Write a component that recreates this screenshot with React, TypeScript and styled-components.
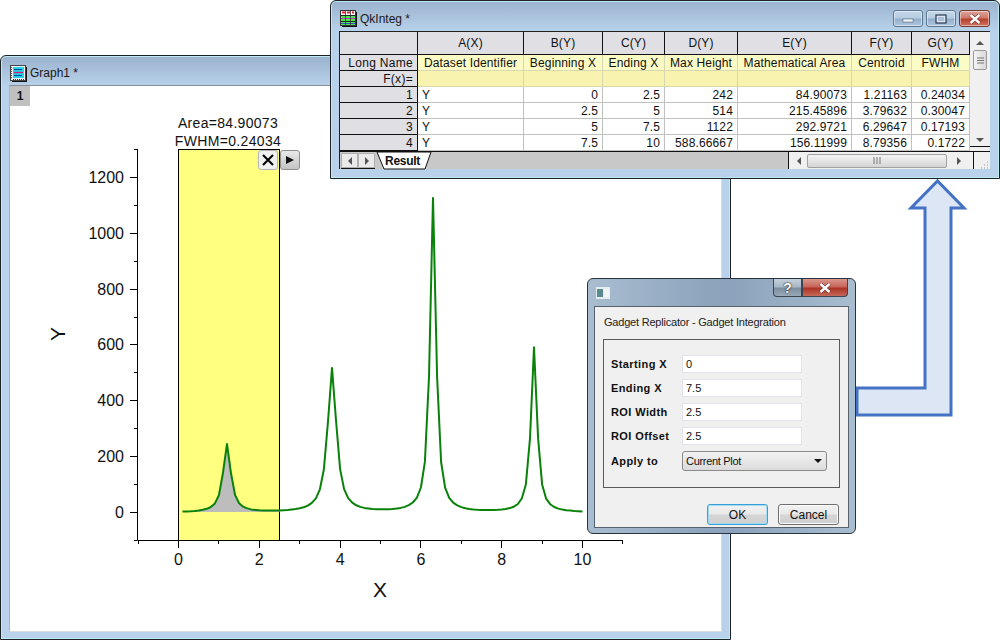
import React from "react";
import styled, { createGlobalStyle } from "styled-components";

const Global = createGlobalStyle`
  html, body { margin: 0; padding: 0; background: #fff; }
  body { font-family: "Liberation Sans", Arial, sans-serif; }
`;

const Desktop = styled.div`
  position: relative;
  width: 1000px;
  height: 640px;
  overflow: hidden;
  background: #fff;
  font-size: 12px;
  color: #111;
`;

const Window = styled.div<{ $x: number; $y: number; $w: number; $h: number }>`
  position: absolute;
  left: ${(p) => p.$x}px;
  top: ${(p) => p.$y}px;
  width: ${(p) => p.$w}px;
  height: ${(p) => p.$h}px;
  box-sizing: border-box;
  display: flex;
  flex-direction: column;
  border: 1px solid #1a2228;
  border-radius: 6px 6px 0 0;
  box-shadow: inset 0 0 0 1px #bfeaf5;
  background: linear-gradient(180deg, #9ab2cd 0, #b9d2eb 30px, #b9d1ea 100%);
`;

const TitleBar = styled.div<{ $h: number; $pad: number }>`
  flex: none;
  height: ${(p) => p.$h}px;
  display: flex;
  align-items: center;
  gap: 3px;
  padding: ${(p) => p.$pad}px 9px 0 9px;
  box-sizing: border-box;
  font-size: 12px;
  color: #1a1a1a;
`;

const TitleText = styled.span`
  flex: 1;
`;

const WinButton = styled.div<{ $close?: boolean }>`
  width: ${(p) => (p.$close ? 31 : 30)}px;
  height: 17px;
  box-sizing: border-box;
  display: flex;
  align-items: center;
  justify-content: center;
  border: 1px solid ${(p) => (p.$close ? "#6e3b36" : "#5f7892")};
  border-radius: 3px;
  background: ${(p) =>
    p.$close
      ? "linear-gradient(180deg,#dca497 0,#cf7a6b 45%,#b8402f 55%,#cf7360 100%)"
      : "linear-gradient(180deg,#c6d8ea 0,#b6cce2 45%,#93aecb 55%,#afc8e0 100%)"};
  box-shadow: inset 0 0 0 1px rgba(255,255,255,.45);
`;

const WinButtons = styled.div`
  display: flex;
  gap: 3px;
`;

const GraphClient = styled.div`
  position: relative;
  flex: 1;
  margin: 0 8px 7px 8px;
  background: #fff;
  border-top: 1px solid #8a9099;
  border-left: 1px solid #b0b4ba;
  border-right: 1px solid #dcdcdc;
  border-bottom: 1px solid #dcdcdc;
`;

const LayerTab = styled.div`
  position: absolute;
  left: 0;
  top: 0;
  width: 20px;
  height: 20px;
  background: #c0c0c0;
  font-size: 12px;
  font-weight: bold;
  display: flex;
  align-items: center;
  justify-content: center;
`;

const ChartSvg = styled.svg`
  display: block;
  width: 711px;
  height: 545px;
  font-family: "Liberation Sans", Arial, sans-serif;
`;

const GadgetButton = styled.div<{ $x: number; $light?: boolean }>`
  position: absolute;
  left: ${(p) => p.$x}px;
  top: 64px;
  width: 20px;
  height: 20px;
  box-sizing: border-box;
  border: 1px solid ${(p) => (p.$light ? "#b4b4b4" : "#8f8f8f")};
  border-radius: 3px;
  background: ${(p) =>
    p.$light ? "#f0f0f0" : "linear-gradient(180deg,#e8e8e8,#c4c4c4)"};
  display: flex;
  align-items: center;
  justify-content: center;
`;

/* Workbook */
const BookClient = styled.div`
  flex: none;
  margin: 0 8px;
  width: 651px;
  height: 138px;
  background: #f0f0f0;
  box-sizing: border-box;
  display: flex;
  flex-direction: column;
  border-top: 1px solid #222;
  border-left: 1px solid #222;
`;

const SheetRow = styled.div`
  display: flex;
  height: 119px;
  flex: none;
`;

const Sheet = styled.div`
  display: grid;
  width: 630px;
  grid-template-columns: 78px 106px 79px 62px 73px 114px 60px 58px;
  grid-template-rows: 23px repeat(6, 16px);
  background: #fff;
`;

const Cell = styled.div<{
  $kind: "head" | "side" | "long" | "formula" | "data";
  $align?: "left" | "right" | "center";
}>`
  box-sizing: border-box;
  font-size: 12px;
  line-height: 15px;
  letter-spacing: ${(p) => (p.$kind === "side" ? 0.3 : 0.14)}px;
  padding: ${(p) => (p.$kind === "head" ? "0 4px" : "1px 4px 0")};
  white-space: nowrap;
  overflow: hidden;
  display: flex;
  align-items: center;
  justify-content: ${(p) =>
    p.$align === "left" ? "flex-start" : p.$align === "center" ? "center" : "flex-end"};
  background: ${(p) =>
    p.$kind === "head" || p.$kind === "side"
      ? "#dfdfe4"
      : p.$kind === "long"
      ? "#fbfbc6"
      : p.$kind === "formula"
      ? "#f8f4b0"
      : "#fff"};
  border-right: 1px solid ${(p) => (p.$kind === "data" ? "#c0c0c0" : p.$kind === "head" || p.$kind === "side" ? "#111" : "#d8d8b0")};
  border-bottom: 1px solid ${(p) => (p.$kind === "data" ? "#c0c0c0" : p.$kind === "head" || p.$kind === "side" ? "#111" : "#d8d8b0")};
`;

const VScroll = styled.div`
  width: 20px;
  background: #f0f0f0;
  display: flex;
  flex-direction: column;
  align-items: center;
`;

const ScrollArrow = styled.svg<{ $top?: number }>`
  display: block;
  flex: none;
  margin-top: ${(p) => p.$top ?? 0}px;
`;

const VThumb = styled.div`
  width: 14px;
  height: 20px;
  margin-top: 4px;
  flex: none;
  box-sizing: border-box;
  border: 1px solid #9a9a9a;
  border-radius: 2px;
  background: linear-gradient(90deg,#f4f4f4,#d8d8d8);
  display: flex;
  align-items: center;
  justify-content: center;
`;

const VTail = styled.div`
  width: 100%;
  height: 1px;
  flex: none;
  margin-top: 3px;
  background: #111;
`;

const TabBar = styled.div`
  flex: 1;
  display: flex;
  align-items: stretch;
  border-top: 1px solid #111;
  background: #c8c8c8;
`;

const TabNav = styled.div`
  width: 34px;
  margin: 1px 0 0 1px;
  display: flex;
  flex: none;
  border-bottom: 1px solid #111;
`;

const TabNavBtn = styled.div`
  flex: 1;
  display: flex;
  align-items: center;
  justify-content: center;
  background: #eaeaea;
  border: 1px solid #b0b0b0;
`;

const SheetTab = styled.div`
  position: relative;
  width: 57px;
  flex: none;
  margin-left: 1px;
  display: flex;
  align-items: center;
  justify-content: center;
  font-size: 12px;
  font-weight: bold;
  letter-spacing: -0.3px;
  padding-right: 4px;
  box-sizing: border-box;
`;

const TabShape = styled.svg`
  position: absolute;
  left: 0;
  top: 0;
`;

const TabLabel = styled.span`
  position: relative;
`;

const TabFill = styled.div`
  width: 355px;
  flex: none;
  border-right: 1px solid #111;
`;

const HScroll = styled.div`
  flex: none;
  width: 184px;
  background: #f0f0f0;
  display: flex;
  align-items: center;
  padding-left: 7px;
  box-sizing: border-box;
  gap: 5px;
`;

const HThumb = styled.div`
  flex: none;
  width: 140px;
  height: 14px;
  margin-right: 4px;
  box-sizing: border-box;
  border: 1px solid #a0a0a0;
  border-radius: 2px;
  background: linear-gradient(180deg,#f4f4f4,#d4d4d4);
  display: flex;
  align-items: center;
  justify-content: center;
`;

const Grip = styled.div`
  flex: 1;
  border-left: 1px solid #111;
  background: #f0f0f0;
  display: flex;
  align-items: flex-end;
  justify-content: flex-end;
`;

/* Dialog */
const Dialog = styled.div`
  position: absolute;
  left: 587px;
  top: 278px;
  width: 269px;
  height: 256px;
  box-sizing: border-box;
  border: 1px solid #28333d;
  border-radius: 6px;
  background: linear-gradient(90deg,#a9bdd0 0,#8da4bd 45%,#8ba3bc 55%,#a9bdd0 100%);
  display: flex;
  flex-direction: column;
`;

const DialogTop = styled.div`
  height: 26px;
  flex: none;
  display: flex;
  align-items: flex-start;
  justify-content: space-between;
  padding-left: 8px;
`;

const DialogIcon = styled.svg`
  margin-top: 8px;
`;

const DialogCaps = styled.div`
  display: flex;
  margin-right: 7px;
`;

const CapButton = styled.div<{ $close?: boolean }>`
  width: ${(p) => (p.$close ? 46 : 29)}px;
  height: 18px;
  box-sizing: border-box;
  border: 1px solid #3c4650;
  border-top: none;
  border-radius: ${(p) => (p.$close ? "0 0 4px 0" : "0 0 0 4px")};
  background: ${(p) =>
    p.$close
      ? "linear-gradient(180deg,#d8988c 0,#c8655a 45%,#ab3526 55%,#c6695a 100%)"
      : "linear-gradient(180deg,#c4d0dc 0,#aab8c6 45%,#7c8e9f 55%,#9aaaba 100%)"};
  display: flex;
  align-items: center;
  justify-content: center;
  color: #fff;
  font-weight: bold;
  font-size: 14px;
  text-shadow: 0 0 2px #222, 0 0 1px #222;
`;

const DialogBody = styled.div`
  flex: 1;
  margin: 1px 6px 5px 6px;
  box-sizing: border-box;
  background: #f0f0f0;
  border: 1px solid #56636f;
  padding: 0 9px 0 8px;
  display: flex;
  flex-direction: column;
  font-size: 11px;
`;

const Heading = styled.div`
  height: 32px;
  flex: none;
  box-sizing: border-box;
  display: flex;
  align-items: center;
  padding: 0 0 2px 1px;
  letter-spacing: -0.21px;
  color: #222;
`;

const GroupBox = styled.div`
  width: 237px;
  height: 149px;
  flex: none;
  box-sizing: border-box;
  border: 1px solid #5a5a5a;
  padding: 15px 0 0 7px;
  display: grid;
  grid-template-columns: 71px 1fr;
  grid-template-rows: repeat(4, 18px) 20px;
  row-gap: 6px;
  align-items: center;
`;

const FieldLabel = styled.div`
  font-weight: bold;
  letter-spacing: 0.4px;
  color: #111;
  white-space: nowrap;
`;

const FieldBox = styled.div`
  width: 120px;
  height: 18px;
  box-sizing: border-box;
  background: #fff;
  border: 1px solid #e2e3ea;
  padding-left: 3px;
  display: flex;
  align-items: center;
`;

const SelectBox = styled.div`
  width: 145px;
  height: 20px;
  box-sizing: border-box;
  border: 1px solid #8a8a8a;
  border-radius: 3px;
  background: linear-gradient(180deg,#f2f2f2,#dcdcdc);
  padding: 0 4px 0 3px;
  letter-spacing: -0.3px;
  display: flex;
  align-items: center;
  justify-content: space-between;
`;

const ButtonRow = styled.div`
  display: flex;
  justify-content: flex-end;
  gap: 10px;
  margin-top: 16px;
`;

const DlgButton = styled.div<{ $primary?: boolean }>`
  width: 61px;
  height: 21px;
  box-sizing: border-box;
  border: 1px solid ${(p) => (p.$primary ? "#3a9fd6" : "#707070")};
  border-radius: 3px;
  background: linear-gradient(180deg,#f2f2f2 0,#e8e8e8 48%,#d6d6d6 52%,#cfcfcf 100%);
  box-shadow: ${(p) => (p.$primary ? "inset 0 0 0 1px #9fdcf5" : "inset 0 0 0 1px #fbfbfb")};
  display: flex;
  align-items: center;
  justify-content: center;
  font-size: 12px;
`;

const ArrowSvg = styled.svg`
  position: absolute;
  left: 850px;
  top: 175px;
`;

/* Data */
const peaks: [number, number, number][] = [
  [1.2, 244, 0.115],
  [3.8, 516, 0.13],
  [6.3, 1124, 0.087],
  [8.8, 590, 0.09],
];
const fy = (x: number) =>
  peaks.reduce((s, [c, h, w]) => s + h / (1 + ((x - c) / w) ** 2), 0) - 2;
const px = (x: number) => 178.5 + x * 40.4;
const py = (y: number) => 512 - y * 0.2792;
const tickX = (x: number) => Math.floor(px(x)) + 0.5;
const tickY = (y: number) => Math.round(py(y)) + 0.5;
const xs = Array.from({ length: 100 }, (_, i) => (i + 1) / 10);
const curve = xs.map((x) => `${px(x).toFixed(1)},${py(fy(x)).toFixed(1)}`).join(" ");
const area =
  `${px(0.1)},512 ` +
  xs
    .filter((x) => x <= 2.5)
    .map((x) => `${px(x).toFixed(1)},${py(fy(x)).toFixed(1)}`)
    .join(" ") +
  ` ${px(2.5)},512`;

const yMajor = [0, 200, 400, 600, 800, 1000, 1200];
const yMinor = [-100, 100, 300, 500, 700, 900, 1100, 1300];
const xMajor = [0, 2, 4, 6, 8, 10];
const xMinor = [-1, 1, 3, 5, 7, 9, 11];

const columns = ["A(X)", "B(Y)", "C(Y)", "D(Y)", "E(Y)", "F(Y)", "G(Y)"];
const longNames = ["Dataset Identifier", "Beginning X", "Ending X", "Max Height", "Mathematical Area", "Centroid", "FWHM"];
const rows = [
  ["Y", "0", "2.5", "242", "84.90073", "1.21163", "0.24034"],
  ["Y", "2.5", "5", "514", "215.45896", "3.79632", "0.30047"],
  ["Y", "5", "7.5", "1122", "292.9721", "6.29647", "0.17193"],
  ["Y", "7.5", "10", "588.66667", "156.11999", "8.79356", "0.1722"],
];

const Tri = ({ dir, c = "#555" }: { dir: "l" | "r" | "u" | "d"; c?: string }) => {
  const pts = {
    l: "5,0 5,8 1,4",
    r: "1,0 1,8 5,4",
    u: "0,5 8,5 4,1",
    d: "0,1 8,1 4,5",
  }[dir];
  const wide = dir === "u" || dir === "d";
  return (
    <ScrollArrow width={wide ? 8 : 6} height={wide ? 6 : 8}>
      <polygon points={pts} fill={c} />
    </ScrollArrow>
  );
};

const CloseGlyph = () => (
  <svg width="14" height="10" viewBox="0 0 14 10">
    <path d="M2.5 1 L11.5 9 M11.5 1 L2.5 9" stroke="#5a2a24" strokeWidth="3.6" />
    <path d="M2.5 1 L11.5 9 M11.5 1 L2.5 9" stroke="#fff" strokeWidth="2.4" />
  </svg>
);

const GraphIcon = () => (
  <svg width="17" height="17" viewBox="0 0 17 17">
    <rect x="2" y="2" width="15" height="15" fill="#111" />
    <rect x="0.5" y="0.5" width="15" height="15" fill="#f0f0f0" stroke="#444" />
    <rect x="3" y="2" width="11" height="11" fill="#22d4e4" />
    <path d="M4 4.5h8M4 10.5h8" stroke="#1040a0" strokeWidth="1" />
    <path d="M4 7.5h9" stroke="#d0207a" strokeWidth="1.4" />
    <path d="M1.5 2v12" stroke="#d02020" strokeDasharray="1 1" />
    <path d="M3 14.5h11" stroke="#333" strokeDasharray="1 1" />
  </svg>
);

const TableIcon = () => (
  <svg width="17" height="17" viewBox="0 0 17 17">
    <rect x="2" y="2" width="15" height="15" fill="#111" />
    <rect x="0.5" y="0.5" width="15" height="15" fill="#fff" stroke="#333" />
    <path d="M2 2.5h3M7 2.5h3M12 2.5h2" stroke="#e0203a" strokeWidth="2" />
    <rect x="1" y="5" width="14" height="10" fill="#4be84b" />
    <path d="M1 5.5h14M1 11.5h14" stroke="#222" />
    <path d="M1 8.5h14" stroke="#c030d0" />
    <path d="M1 13.5h14" stroke="#3050d0" />
    <path d="M5.5 1v14M10.5 1v14" stroke="#333" strokeWidth="0.8" />
  </svg>
);

export default function App() {
  return (
    <Desktop>
      <Global />

      <Window $x={0} $y={55} $w={731} $h={585}>
        <TitleBar $h={29} $pad={5}>
          <GraphIcon />
          <TitleText>Graph1 *</TitleText>
        </TitleBar>
        <GraphClient>
          <ChartSvg viewBox="10 86 711 545">
            <rect x="178.5" y="149.5" width="101" height="391" fill="#ffff80" stroke="#000" />
            <polygon points={area} fill="#bdbdbd" />
            <polyline points={curve} fill="none" stroke="#0a820a" strokeWidth="2" strokeLinejoin="round" />
            <path d="M137.5 149 V540.5 H622.5" fill="none" stroke="#000" />
            {yMajor.map((v) => (
              <line key={v} x1="130" x2="137" y1={tickY(v)} y2={tickY(v)} stroke="#000" />
            ))}
            {yMinor.map((v) => (
              <line key={v} x1="134" x2="137" y1={tickY(v)} y2={tickY(v)} stroke="#000" />
            ))}
            {xMajor.map((v) => (
              <line key={v} y1="540" y2="548" x1={tickX(v)} x2={tickX(v)} stroke="#000" />
            ))}
            {xMinor.map((v) => (
              <line key={v} y1="540" y2="544" x1={tickX(v)} x2={tickX(v)} stroke="#000" />
            ))}
            {yMajor.map((v) => (
              <text key={v} x="124" y={py(v) + 6} textAnchor="end" fontSize="16" fill="#111">{v}</text>
            ))}
            {xMajor.map((v) => (
              <text key={v} x={px(v)} y="565" textAnchor="middle" fontSize="16" fill="#111">{v}</text>
            ))}
            <text x="380" y="597" textAnchor="middle" fontSize="21" fill="#111">X</text>
            <text x="0" y="0" textAnchor="middle" fontSize="21" fill="#111" transform="translate(65 334) rotate(-90)">Y</text>
            <text x="228" y="128" textAnchor="middle" fontSize="14" letterSpacing="0.3" fill="#111">Area=84.90073</text>
            <text x="228" y="146" textAnchor="middle" fontSize="14" letterSpacing="0.35" fill="#111">FWHM=0.24034</text>
          </ChartSvg>
          <LayerTab>1</LayerTab>
          <GadgetButton $x={248} $light>
            <svg width="14" height="14" viewBox="0 0 14 14">
              <path d="M2 2 L12 12 M12 2 L2 12" stroke="#000" strokeWidth="2" />
            </svg>
          </GadgetButton>
          <GadgetButton $x={270}>
            <svg width="10" height="10" viewBox="0 0 10 10">
              <polygon points="1,1 9,5 1,9" fill="#111" />
            </svg>
          </GadgetButton>
        </GraphClient>
      </Window>

      <Window $x={330} $y={0} $w={670} $h={179}>
        <TitleBar $h={30} $pad={5}>
          <TableIcon />
          <TitleText>QkInteg *</TitleText>
          <WinButtons>
            <WinButton>
              <svg width="12" height="8"><rect x="1" y="4" width="10" height="3" fill="#f2f4f7" stroke="#5a6a7c" strokeWidth="0.6" /></svg>
            </WinButton>
            <WinButton>
              <svg width="12" height="10"><rect x="1" y="1" width="10" height="8" fill="#dde6ee" stroke="#2c3a50" strokeWidth="1.2" /><rect x="3" y="3" width="6" height="4" fill="#a9c0d8" /></svg>
            </WinButton>
            <WinButton $close><CloseGlyph /></WinButton>
          </WinButtons>
        </TitleBar>
        <BookClient>
          <SheetRow>
            <Sheet>
              <Cell $kind="head" />
              {columns.map((c) => (
                <Cell key={c} $kind="head" $align="center">{c}</Cell>
              ))}
              <Cell $kind="side">Long Name</Cell>
              {longNames.map((c) => (
                <Cell key={c} $kind="long" $align="center">{c}</Cell>
              ))}
              <Cell $kind="side">F(x)=</Cell>
              {columns.map((c) => (
                <Cell key={c} $kind="formula" />
              ))}
              {rows.map((r, i) => (
                <React.Fragment key={i}>
                  <Cell $kind="side">{i + 1}</Cell>
                  {r.map((v, j) => (
                    <Cell key={j} $kind="data" $align={j === 0 ? "left" : "right"}>{v}</Cell>
                  ))}
                </React.Fragment>
              ))}
            </Sheet>
            <VScroll>
              <ScrollArrow width="8" height="6" $top={8}><polygon points="0,5 8,5 4,1" fill="#555" /></ScrollArrow>
              <VThumb>
                <svg width="7" height="7"><path d="M0 1h7M0 3.5h7M0 6h7" stroke="#777" /></svg>
              </VThumb>
              <ScrollArrow width="8" height="6" $top={67}><polygon points="0,1 8,1 4,5" fill="#555" /></ScrollArrow>
              <VTail />
            </VScroll>
          </SheetRow>
          <TabBar>
            <TabNav>
              <TabNavBtn><Tri dir="l" /></TabNavBtn>
              <TabNavBtn><Tri dir="r" /></TabNavBtn>
            </TabNav>
            <SheetTab>
              <TabShape width="57" height="18">
                <polygon points="1,0 8,17 49,17 55,0" fill="#fff" stroke="#111" />
              </TabShape>
              <TabLabel>Result</TabLabel>
            </SheetTab>
            <TabFill />
            <HScroll>
              <Tri dir="l" />
              <HThumb>
                <svg width="9" height="7"><path d="M1 0v7M4 0v7M7 0v7" stroke="#777" /></svg>
              </HThumb>
              <Tri dir="r" />
            </HScroll>
            <Grip>
              <svg width="10" height="10" viewBox="0 0 10 10">
                <path d="M7 3h1M4 6h1M7 6h1M1 9h1M4 9h1M7 9h1" stroke="#999" />
              </svg>
            </Grip>
          </TabBar>
        </BookClient>
      </Window>

      <ArrowSvg width="120" height="245" viewBox="850 175 120 245">
        <polygon
          points="857,388 925,388 925,208 911,208 937.5,181 964,208 951,208 951,415 857,415"
          fill="#dce6f4"
          stroke="#4472c4"
          strokeWidth="3"
        />
      </ArrowSvg>

      <Dialog>
        <DialogTop>
          <DialogIcon width="14" height="12" viewBox="0 0 14 12">
            <rect width="14" height="12" fill="#e4eef0" />
            <rect x="1" y="2" width="6" height="8" fill="#5a8a90" />
            <rect x="8" y="2" width="5" height="8" fill="#f4f4f4" />
          </DialogIcon>
          <DialogCaps>
            <CapButton>?</CapButton>
            <CapButton $close><CloseGlyph /></CapButton>
          </DialogCaps>
        </DialogTop>
        <DialogBody>
          <Heading>Gadget Replicator - Gadget Integration</Heading>
          <GroupBox>
            <FieldLabel>Starting X</FieldLabel>
            <FieldBox>0</FieldBox>
            <FieldLabel>Ending X</FieldLabel>
            <FieldBox>7.5</FieldBox>
            <FieldLabel>ROI Width</FieldLabel>
            <FieldBox>2.5</FieldBox>
            <FieldLabel>ROI Offset</FieldLabel>
            <FieldBox>2.5</FieldBox>
            <FieldLabel>Apply to</FieldLabel>
            <SelectBox>
              Current Plot
              <Tri dir="d" c="#111" />
            </SelectBox>
          </GroupBox>
          <ButtonRow>
            <DlgButton $primary>OK</DlgButton>
            <DlgButton>Cancel</DlgButton>
          </ButtonRow>
        </DialogBody>
      </Dialog>
    </Desktop>
  );
}
